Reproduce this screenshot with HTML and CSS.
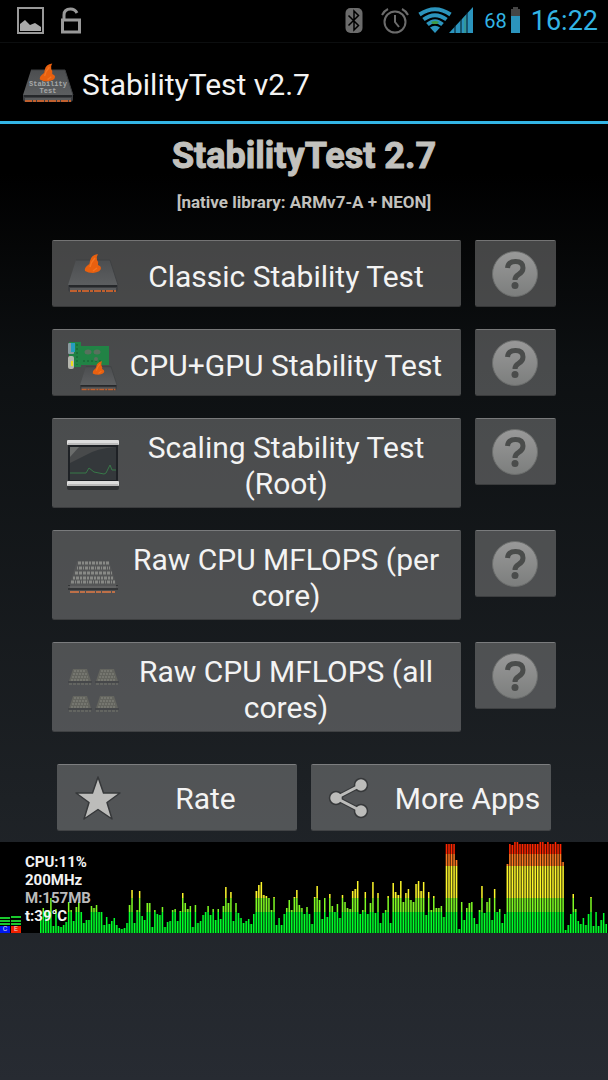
FILE: index.html
```html
<!DOCTYPE html>
<html lang="en">
<head>
    <meta charset="UTF-8">
    <meta name="viewport" content="width=device-width, initial-scale=1.0">
    <title>StabilityTest v2.7</title>
    <link rel="stylesheet" href="styles.css">
</head>
<body>
    <svg class="defs" width="0" height="0" aria-hidden="true">
        <defs>
            <linearGradient id="slab" x1="0" y1="0" x2="0" y2="1">
                <stop offset="0" stop-color="#4c4e50"/>
                <stop offset="1" stop-color="#5c5e60"/>
            </linearGradient>
            <linearGradient id="disc" x1="0" y1="0" x2="0" y2="1">
                <stop offset="0" stop-color="#999"/>
                <stop offset="1" stop-color="#7c7e7d"/>
            </linearGradient>
            <symbol id="chip" viewBox="0 0 52 42">
                <path d="M9 9H43L51 34H1Z" fill="url(#slab)"/>
                <path d="M9 9H43L51 34" fill="none" stroke="#3f4143"/>
                <path d="M1 34H51V38Q51 41 48 41H4Q1 41 1 38Z" fill="#3c3e41"/>
                <path d="M2 35H50" stroke="#26282b" stroke-width="2"/>
                <path d="M3 38H49" stroke="#77797b"/>
                <path d="M3 40H49" stroke="#c0602f" stroke-width="2" stroke-dasharray="7 1 3 1"/>
            </symbol>
            <symbol id="flame" viewBox="0 0 18 19">
                <path d="M14 0Q7 1 6 7Q6 10 4 11Q0 14 1 17Q4 19 9 19Q17 18 17 14Q17 12 14 11Q15 8 13 6Q12 3 14 0Z" fill="#e8600f"/>
                <path d="M11 4Q7 8 6 13M13 14L9 17" fill="none" stroke="#f47420" stroke-width="1.5"/>
            </symbol>
            <symbol id="help" viewBox="0 0 48 48">
                <circle cx="23" cy="24" r="22.5" fill="url(#disc)" stroke="#6b6d6c"/>
                <path d="M15.500 18Q16 11.500 23.500 11.500Q31 11.500 31 18Q31 22 26.500 24.500Q23 26.500 23 30" fill="none" stroke="#4a4c4b" stroke-width="5"/>
                <circle cx="23" cy="35.500" r="3.500" fill="#4a4c4b"/>
            </symbol>
            <symbol id="mini" viewBox="0 0 24 17">
                <path d="M5 1H19L23 13H1Z" fill="#64655f"/>
                <path d="M6 3H18M5 6H19M4 9H20M3 12H21" stroke="#7b7c76" stroke-width="1.500" stroke-dasharray="2 1"/>
                <path d="M0 14H24" stroke="#3d3f40"/>
                <path d="M1 16H23" stroke="#77786f" stroke-dasharray="3 1"/>
            </symbol>
        </defs>
    </svg>

    <header class="status-bar">
        <svg class="picture-icon" width="28" height="28" viewBox="0 0 28 28">
            <rect x="1" y="1" width="25" height="25" fill="none" stroke="#999" stroke-width="2"/>
            <path d="M3 24V17L8 13L13 18L18 16L24 20V24Z" fill="#aaa"/>
        </svg>
        <svg class="lock-icon" width="20" height="28" viewBox="0 0 20 28">
            <path d="M3 13V8Q3 2 9.500 2Q14 2 16 6" fill="none" stroke="#999" stroke-width="3"/>
            <rect x="1.500" y="13" width="17" height="12" fill="none" stroke="#999" stroke-width="3"/>
        </svg>
        <div class="status-right">
            <svg width="18" height="28" viewBox="0 0 18 28">
                <rect x="0.500" y="1" width="17" height="25" rx="5" fill="#6c6c6c"/>
                <path d="M3.500 8.500L13.500 18.500L9 23V4L13.500 8.500L3.500 18.500" fill="none" stroke="#000" stroke-width="1.500"/>
            </svg>
            <svg class="alarm-icon" width="28" height="28" viewBox="0 0 28 28">
                <circle cx="14" cy="15" r="10.500" fill="none" stroke="#6c6c6c" stroke-width="2"/>
                <path d="M14 8V15L18 20M1 8Q3 4 7 2M27 8Q25 4 21 2" fill="none" stroke="#6c6c6c" stroke-width="2"/>
            </svg>
            <svg class="wifi-icon" width="56" height="28" viewBox="0 0 56 28">
                <g fill="none" stroke="#2b94bd" stroke-width="4">
                    <path d="M1.500 7.500Q17 -3 32.500 7.500"/>
                    <path d="M5.500 12.500Q17 4 28.500 12.500"/>
                    <path d="M9.500 17.500Q17 11 24.500 17.500"/>
                </g>
                <path d="M12 20.500Q17 17 22 20.500L17 26Z" fill="#2b94bd"/>
                <path d="M13 15Q17 13 21 15L19 17H15Z" fill="#3d9a45"/>
                <path d="M31 26L55 0V26Z" fill="#2b94bd"/>
                <path d="M37 18V26M43 12V26M49 5V26" stroke="#04151c" stroke-width="1"/>
                <path d="M47 10V26" stroke="#3d9a73"/>
            </svg>
            <span class="battery-level">68</span>
            <svg class="battery-icon" width="9" height="28" viewBox="0 0 9 28">
                <path d="M2 0H7V2H9V9H0V2H2Z" fill="#454545"/>
                <rect y="9" width="9" height="17" fill="#2b94bd"/>
            </svg>
            <time class="clock">16:22</time>
        </div>
    </header>

    <div class="action-bar">
        <svg width="52" height="46" viewBox="0 0 52 46">
            <use href="#chip" x="0" y="0" width="52" height="42"/>
            <use href="#flame" x="17" y="2" width="17" height="19"/>
            <g class="icon-text" fill="#a6a8a8" text-anchor="middle">
                <text x="26" y="25">Stability</text>
                <text x="26" y="32">Test</text>
            </g>
        </svg>
        <span class="app-name">StabilityTest v2.7</span>
    </div>

    <main>
        <h1>StabilityTest 2.7</h1>
        <p class="library">[native library: ARMv7-A + NEON]</p>

        <div class="row">
            <button class="btn test">
                <svg width="52" height="52" viewBox="0 0 52 52">
                    <use href="#chip" x="0" y="0" width="52" height="42"/>
                    <use href="#flame" x="17" y="3" width="18" height="19"/>
                </svg>
                <span>Classic Stability Test</span>
            </button>
            <button class="btn help" aria-label="About Classic Stability Test"><svg width="48" height="48"><use href="#help"/></svg></button>
        </div>
        <div class="row">
            <button class="btn test">
                <svg width="52" height="52" viewBox="0 0 52 52">
                    <path d="M2 2H14V6H42V25H14V27H2Z" fill="#218345"/>
                    <path d="M10 4V25M16 21H34" stroke="#165d31" stroke-dasharray="2 2"/>
                    <g fill="#57715d"><ellipse cx="21" cy="12" rx="3.500" ry="2.500"/><ellipse cx="30" cy="12" rx="3.500" ry="2.500"/><circle cx="29" cy="19" r="2"/></g>
                    <rect x="1" y="3" width="6" height="11" rx="1" fill="#8a9a9f"/>
                    <rect x="4" y="3" width="4" height="9" fill="#259cc0"/>
                    <rect x="1" y="16" width="6" height="13" rx="2" fill="#b5b6ae"/>
                    <path d="M5 21V26" stroke="#eadf20" stroke-width="2"/>
                    <use href="#chip" x="12" y="20" width="39" height="31"/>
                    <use href="#flame" x="25" y="21" width="13" height="14"/>
                </svg>
                <span>CPU+GPU Stability Test</span>
            </button>
            <button class="btn help" aria-label="About CPU+GPU Stability Test"><svg width="48" height="48"><use href="#help"/></svg></button>
        </div>
        <div class="row">
            <button class="btn test">
                <svg width="52" height="52" viewBox="0 0 52 52">
                    <rect x="0" y="45" width="52" height="5" rx="2" fill="#303234"/>
                    <rect x="1" y="5" width="50" height="37" fill="#1e2125"/>
                    <rect x="3" y="7" width="46" height="33" fill="#34383b"/>
                    <path d="M3 7H49Q30 8 17 16L3 23Z" fill="#484a4b"/>
                    <path d="M3 7H12L3 17Z" fill="#6b6d6c"/>
                    <path d="M3 33H19L22 28L27 32L37 34L39 33L43 25L45 30H49" fill="none" stroke="#377848"/>
                    <rect y="0" width="52" height="5" rx="1" fill="#ddd"/>
                    <path d="M1 4H51" stroke="#999"/>
                    <rect y="41" width="52" height="5" rx="1" fill="#ddd"/>
                    <path d="M1 45H51" stroke="#999"/>
                </svg>
                <span>Scaling Stability Test (Root)</span>
            </button>
            <button class="btn help" aria-label="About Scaling Stability Test"><svg width="48" height="48"><use href="#help"/></svg></button>
        </div>
        <div class="row">
            <button class="btn test">
                <svg width="52" height="52" viewBox="0 0 52 52">
                    <path d="M10 9H42L50 34H2Z" fill="#555657"/>
                    <g fill="none" stroke="#888986" stroke-width="3">
                        <path d="M11 11H42" stroke-dasharray="3 1 2 1"/>
                        <path d="M10 16H43" stroke-dasharray="1 1 3 1"/>
                        <path d="M8 21H45" stroke-dasharray="3 1"/>
                        <path d="M6 26H46" stroke-dasharray="2 1 3 1"/>
                        <path d="M4 30H48" stroke-dasharray="3 1 1 1"/>
                    </g>
                    <path d="M2 33V37H50V33" fill="none" stroke="#333537" stroke-width="2"/>
                    <path d="M1 35H51" stroke="#777"/>
                    <path d="M3 40H48" stroke="#bd7048" stroke-width="2" stroke-dasharray="9 1 5 1"/>
                </svg>
                <span>Raw CPU MFLOPS (per core)</span>
            </button>
            <button class="btn help" aria-label="About Raw CPU MFLOPS per core"><svg width="48" height="48"><use href="#help"/></svg></button>
        </div>
        <div class="row">
            <button class="btn test">
                <svg width="52" height="52" viewBox="0 0 52 52">
                    <use href="#mini" x="1" y="4" width="24" height="17"/>
                    <use href="#mini" x="28" y="4" width="24" height="17"/>
                    <use href="#mini" x="1" y="31" width="24" height="17"/>
                    <use href="#mini" x="28" y="31" width="24" height="17"/>
                </svg>
                <span>Raw CPU MFLOPS (all cores)</span>
            </button>
            <button class="btn help" aria-label="About Raw CPU MFLOPS all cores"><svg width="48" height="48"><use href="#help"/></svg></button>
        </div>

        <div class="row links">
            <button class="btn link">
                <svg width="48" height="48" viewBox="0 0 48 48">
                    <path d="M24 2L29.500 18H46L33 27.500L38 44L24 34.500L10 44L15 27.500L2 18H18.500Z" fill="#bcbcba" stroke="#36383a" stroke-width="1.500" stroke-linejoin="round"/>
                </svg>
                <span>Rate</span>
            </button>
            <button class="btn link more">
                <svg width="48" height="48" viewBox="0 0 48 48">
                    <g stroke="#36383a" stroke-width="1.500" fill="#bcbcba">
                        <path d="M33 10L8 23L33 36" fill="none" stroke-width="5"/>
                        <circle cx="33" cy="10" r="6.500"/>
                        <circle cx="8" cy="23" r="6.500"/>
                        <circle cx="33" cy="36" r="6.500"/>
                    </g>
                    <path d="M33 10L8 23L33 36" fill="none" stroke="#bcbcba" stroke-width="3"/>
                </svg>
                <span>More Apps</span>
            </button>
        </div>
    </main>

    <section class="monitor">
        <svg id="graph" viewBox="0 0 608 91" preserveAspectRatio="none">
            <defs>
                <linearGradient id="load" gradientUnits="userSpaceOnUse" x1="0" y1="0" x2="0" y2="91">
                    <stop offset="0.132" stop-color="#ff2600"/>
                    <stop offset="0.132" stop-color="#ff7a20"/>
                    <stop offset="0.264" stop-color="#ff7a20"/>
                    <stop offset="0.264" stop-color="#fdf72a"/>
                    <stop offset="0.615" stop-color="#fdf72a"/>
                    <stop offset="0.615" stop-color="#7dfa23"/>
                    <stop offset="0.770" stop-color="#7dfa23"/>
                    <stop offset="0.770" stop-color="#00ff2a"/>
                </linearGradient>
            </defs>
            <g id="bars" fill="url(#load)"></g>
            <path d="M0 76H10M11 75H21M0 79H10M11 79H21M0 82H10M11 82H21" stroke="#19c92d" stroke-width="2"/>
            <path d="M0 84H10V91H0Z" fill="#0018f0"/>
            <path d="M11 84H21V91H11Z" fill="#f02000"/>
            <g class="core-label" fill="#ddd" text-anchor="middle">
                <text x="5" y="89">C</text>
                <text x="16" y="89">E</text>
            </g>
        </svg>
        <div class="readout">
            <div>CPU:11%</div>
            <div>200MHz</div>
            <div class="memory">M:157MB</div>
            <div>t:39°C</div>
        </div>
    </section>

    <script src="graph.js"></script>
</body>
</html>
```
FILE: styles.css
```css
html {
    min-height: 100%;
    background: #272b32;
}
body {
    min-height: 100vh;
    margin: 0;
    font-family: Roboto, "Liberation Sans", sans-serif;
    color: #f3f3f3;
    background: linear-gradient(#000 0%, #000 16%, #0d1012 34%, #1d2125 74%, #272b32 100%);
}
svg {
    flex: none;
    display: block;
}
.defs {
    position: absolute;
}
.status-bar {
    display: flex;
    align-items: center;
    box-sizing: border-box;
    height: 43px;
    padding: 0 10px 0 17px;
    border-bottom: 1px solid #0c0e0f;
    background: #000;
}
.lock-icon {
    margin-left: 16px;
}
.status-right {
    display: flex;
    align-items: center;
    margin-left: auto;
    color: #33b5e5;
}
.alarm-icon {
    margin-left: 18px;
}
.wifi-icon {
    margin-left: 9px;
}
.battery-level {
    margin-left: 10px;
    font-size: 20px;
}
.battery-icon {
    margin-left: 4px;
}
.clock {
    margin-left: 11px;
    font-size: 27px;
}
.action-bar {
    display: flex;
    align-items: center;
    gap: 8px;
    box-sizing: border-box;
    height: 81px;
    padding: 4px 0 0 22px;
    border-bottom: 3px solid #33b5e5;
    background: #000;
}
.icon-text {
    font-family: "Liberation Mono", monospace;
    font-size: 7px;
    font-weight: bold;
}
.app-name {
    font-size: 30px;
}
main {
    padding: 8px 52px 11px;
}
h1,
.library {
    font-family: Impact, Roboto, "Liberation Sans", sans-serif;
    font-weight: bold;
    text-align: center;
    color: #c2c1bd;
}
h1 {
    margin: 0;
    font-size: 36px;
    line-height: 48px;
    -webkit-text-stroke: 1px #c2c1bd;
}
.library {
    margin: 10px 0 26px;
    font-size: 17px;
    line-height: 24px;
}
.row {
    display: flex;
    align-items: flex-start;
    gap: 14px;
    margin-bottom: 22px;
}
.btn {
    display: flex;
    align-items: center;
    box-sizing: border-box;
    min-height: 67px;
    padding: 8px;
    border: 0;
    border-top: 1px solid rgba(190, 190, 190, 0.6);
    border-bottom: 1px solid rgba(100, 100, 100, 0.5);
    border-radius: 2px;
    font-family: inherit;
    font-size: 30px;
    line-height: 36px;
    color: #f3f3f3;
    background: rgba(142, 142, 142, 0.47);
    background-clip: padding-box;
    cursor: pointer;
}
.btn span {
    flex: 1;
    text-align: center;
}
.test {
    flex: 1;
    padding: 11px 8px 5px 15px;
}
.test svg {
    margin: -4px 0;
}
.help {
    justify-content: center;
    width: 81px;
}
.links {
    margin: 32px 5px 0;
}
.link {
    flex: 1;
    padding: 9px 8px 7px 17px;
}
.more {
    gap: 16px;
}
.monitor {
    position: relative;
    height: 91px;
    background: #000;
}
#graph {
    width: 100%;
    height: 91px;
}
.core-label {
    font-size: 7px;
}
/* text sits on top of the graph */
.readout {
    position: absolute;
    top: 11px;
    left: 25px;
    font-size: 15px;
    line-height: 18px;
    font-weight: bold;
}
.memory {
    color: #bbb;
}
```
FILE: graph.js
```javascript
// cpu load history, one bar per sample
var samples = [
    13, 25, 22, 23, 35, 7, 24, 7, 6, 8, 11, 31, 23, 12, 26, 31, 21, 10, 13, 13, 27, 25, 28, 21, 21, 8, 16, 9, 12, 15,
    8, 5, 4, 5, 10, 28, 43, 10, 23, 42, 17, 13, 30, 30, 6, 23, 19, 18, 26, 6, 11, 12, 23, 24, 12, 22, 40, 30, 24, 27,
    6, 28, 10,
    12, 18, 21, 27, 18, 24, 13, 24, 14, 27, 46, 30, 41, 12, 30, 20, 15, 10, 12, 14, 9, 19, 42, 48, 51, 38, 37, 35, 23,
    36, 8, 15, 8, 19, 25, 33, 23, 36, 43, 28, 25, 19, 26, 19, 9, 36, 47, 33, 14, 35, 16, 39, 27, 21, 29, 15, 38, 31,
    25, 24, 42, 44, 52, 19, 23, 41, 19, 30, 51, 20, 40, 10, 20, 23, 37, 10, 50, 41, 38,
    52, 31, 40, 44, 33, 31, 49, 52, 42, 51, 18, 41, 23, 37, 25, 25, 27, 16, 89, 89, 89, 89, 73, 4, 31, 13, 25, 30, 31,
    15, 9, 23, 47, 20, 31, 35, 13, 44, 21, 24, 10, 19, 69, 89, 88, 91, 91, 89, 89, 89, 89, 89, 89, 89, 89, 91, 91, 89,
    91, 89, 89, 91, 89, 89, 71, 3, 8, 19, 39, 24, 12, 9, 15, 8, 19, 36, 7, 21, 7, 13, 20, 9
];
var bars = document.getElementById('bars');
var step = 568 / samples.length;

function addBar(x, width, height, opacity) {
    var rect = document.createElementNS('http://www.w3.org/2000/svg', 'rect');
    rect.setAttribute('x', x);
    rect.setAttribute('y', 91 - height);
    rect.setAttribute('width', width);
    rect.setAttribute('height', height);
    rect.setAttribute('opacity', opacity);
    bars.appendChild(rect);
}

for (var i = 0; i < samples.length; i++) {
    var x = 40 + i * step;
    addBar(x, 1.5, samples[i], 1);
    // darker edge between two neighbours
    addBar(x + 1.5, step - 1.5, Math.min(samples[i], samples[i + 1] || 0), 0.3);
}
```
